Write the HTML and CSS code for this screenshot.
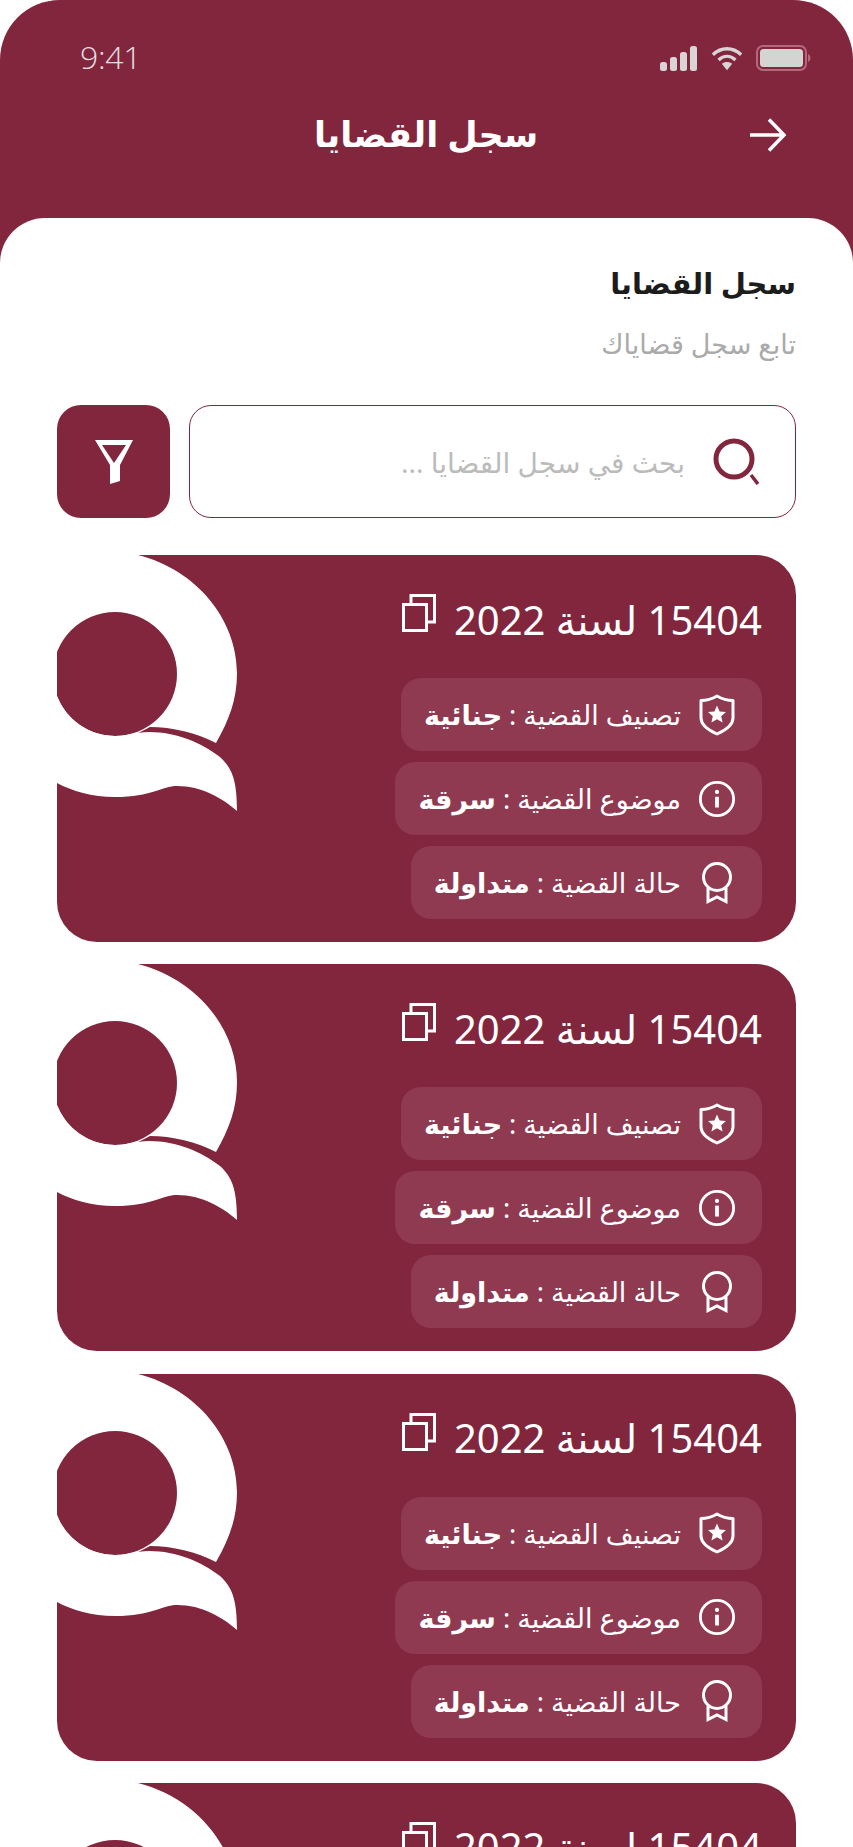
FILE: index.html
```html
<!DOCTYPE html>
<html lang="ar" dir="rtl">
  <head>
    <meta charset="UTF-8" />
    <meta name="viewport" content="width=device-width, initial-scale=1" />
    <title>سجل القضايا</title>
    <link rel="stylesheet" href="styles.css">
  </head>
  <body>
    <svg class="sprite" width="0" height="0" aria-hidden="true">
      <symbol id="mark" viewBox="-1 -1 181 257">
        <path fill="#fff" d="M-1 -1H79L81 0C140 15 180 65 180 118C180 145 172 165 159 188C140 178 115 172 93 172L58 190H-1Z"/>
        <circle fill="#82263e" cx="58" cy="119" r="62"/>
        <path fill="#fff" d="M-1 140L0 141A62 62 0 0 0 58 181C70 181 78 177 92 177C120 177 145 188 163 202C175 213 180 225 180 256C165 243 145 231 120 231C105 231 95 242 58 242C35 242 15 236 0 228L-1 228Z"/>
      </symbol>
      <symbol id="copy" viewBox="0 0 34 39">
        <path fill="none" stroke="#fff" stroke-width="3" d="M1.500 11.500H24.500V37.500H1.500ZM9 11V2.500H32.500V29H25"/>
      </symbol>
      <symbol id="shield" viewBox="0 0 36 42">
        <path fill="none" stroke="#fff" stroke-width="3" stroke-linejoin="round" d="M18 2C23 5 28 6.500 34 6.500V24C34 31 27 36 18 40C9 36 2 31 2 24V6.500C8 6.500 13 5 18 2Z"/>
        <path fill="#fff" d="M18 11.500L20.600 17.400L27 18L22.200 22.200L23.600 28.500L18 25.200L12.400 28.500L13.800 22.200L9 18L15.400 17.400Z"/>
      </symbol>
      <symbol id="info" viewBox="0 0 40 40">
        <circle fill="none" stroke="#fff" stroke-width="3" cx="20" cy="20" r="17.500"/>
        <circle fill="#fff" cx="20" cy="12.500" r="2.200"/>
        <path fill="#fff" d="M18 17.500H22V29H18Z"/>
      </symbol>
      <symbol id="ribbon" viewBox="0 0 32 42">
        <circle fill="none" stroke="#fff" stroke-width="3" cx="16" cy="15" r="13.500"/>
        <path fill="none" stroke="#fff" stroke-width="3" d="M7 26V39.500L16 35L25 39.500V26"/>
      </symbol>
    </svg>

    <div class="phone">
      <header class="topbar">
        <div class="status">
          <span class="clock" dir="ltr">9:41</span>
          <div class="status-icons" dir="ltr">
            <svg width="38" height="25" viewBox="0 0 38 25">
              <g fill="#d9d5d6">
                <rect x="0" y="16" width="7" height="9" rx="2.500"/>
                <rect x="10" y="11" width="7" height="14" rx="2.500"/>
                <rect x="20" y="6" width="7" height="19" rx="2.500"/>
                <rect x="30" y="0" width="7" height="25" rx="2.500"/>
              </g>
            </svg>
            <svg width="32" height="25" viewBox="0 0 34 25">
              <g fill="none" stroke="#d9d5d6" stroke-width="3.500">
                <path d="M2 8.500C11 0 23 0 32 8.500"/>
                <path d="M8 14C13.500 9 20.500 9 26 14"/>
              </g>
              <path fill="#d9d5d6" d="M11.500 18C15 15.500 19 15.500 22.500 18L17 25Z"/>
            </svg>
            <svg width="55" height="26" viewBox="0 0 55 26">
              <rect x="1" y="1" width="49" height="24" rx="6" fill="none" stroke="#b5677c" stroke-width="2"/>
              <rect x="4" y="4" width="43" height="18" rx="3.500" fill="#d4d4d2"/>
              <path fill="#b5677c" d="M52 9C54 10 54.500 11.500 54.500 13C54.500 14.500 54 16 52 17Z"/>
            </svg>
          </div>
        </div>
        <div class="nav">
          <svg class="back" width="38" height="34" viewBox="0 0 38 34">
            <path fill="none" stroke="#fff" stroke-width="3.500" d="M1 17H35M20 1.500L35 17L20 32.500"/>
          </svg>
          <h1>سجل القضايا</h1>
        </div>
      </header>

      <main class="sheet">
        <h2>سجل القضايا</h2>
        <p class="sub">تابع سجل قضاياك</p>

        <div class="tools">
          <div class="search">
            <svg width="46" height="47" viewBox="0 0 46 47">
              <circle cx="21" cy="21" r="18" fill="none" stroke="#82263e" stroke-width="5"/>
              <path d="M38 37L45 46" fill="none" stroke="#82263e" stroke-width="3.500"/>
            </svg>
            <span class="hint">بحث في سجل القضايا ...</span>
          </div>
          <button class="filter" type="button">
            <svg width="38" height="44" viewBox="0 0 38 44">
              <path fill="#fff" fill-rule="evenodd" d="M0 0H38L25 25V41L15 44V25ZM7 5L19 23L31 5Z"/>
            </svg>
          </button>
        </div>

        <section class="case">
          <svg class="mark"><use href="#mark"/></svg>
          <div class="case-title">
            <span>15404 لسنة 2022</span>
            <svg class="copy"><use href="#copy"/></svg>
          </div>
          <div class="chip"><svg class="ic"><use href="#shield"/></svg><span>تصنيف القضية : <b>جنائية</b></span></div>
          <div class="chip"><svg class="ic"><use href="#info"/></svg><span>موضوع القضية : <b>سرقة</b></span></div>
          <div class="chip"><svg class="ic"><use href="#ribbon"/></svg><span>حالة القضية : <b>متداولة</b></span></div>
        </section>

        <section class="case">
          <svg class="mark"><use href="#mark"/></svg>
          <div class="case-title">
            <span>15404 لسنة 2022</span>
            <svg class="copy"><use href="#copy"/></svg>
          </div>
          <div class="chip"><svg class="ic"><use href="#shield"/></svg><span>تصنيف القضية : <b>جنائية</b></span></div>
          <div class="chip"><svg class="ic"><use href="#info"/></svg><span>موضوع القضية : <b>سرقة</b></span></div>
          <div class="chip"><svg class="ic"><use href="#ribbon"/></svg><span>حالة القضية : <b>متداولة</b></span></div>
        </section>

        <section class="case">
          <svg class="mark"><use href="#mark"/></svg>
          <div class="case-title">
            <span>15404 لسنة 2022</span>
            <svg class="copy"><use href="#copy"/></svg>
          </div>
          <div class="chip"><svg class="ic"><use href="#shield"/></svg><span>تصنيف القضية : <b>جنائية</b></span></div>
          <div class="chip"><svg class="ic"><use href="#info"/></svg><span>موضوع القضية : <b>سرقة</b></span></div>
          <div class="chip"><svg class="ic"><use href="#ribbon"/></svg><span>حالة القضية : <b>متداولة</b></span></div>
        </section>

        <section class="case">
          <svg class="mark"><use href="#mark"/></svg>
          <div class="case-title">
            <span>15404 لسنة 2022</span>
            <svg class="copy"><use href="#copy"/></svg>
          </div>
          <div class="chip"><svg class="ic"><use href="#shield"/></svg><span>تصنيف القضية : <b>جنائية</b></span></div>
          <div class="chip"><svg class="ic"><use href="#info"/></svg><span>موضوع القضية : <b>سرقة</b></span></div>
          <div class="chip"><svg class="ic"><use href="#ribbon"/></svg><span>حالة القضية : <b>متداولة</b></span></div>
        </section>
      </main>
    </div>
  </body>
</html>
```

FILE: styles.css
```css
html,
body {
  margin: 0;
  height: 100%;
  background: #fff;
}
body {
  overflow: hidden;
  font-family: "Noto Sans", "DejaVu Sans", sans-serif;
}
.sprite {
  position: absolute;
}
.phone {
  height: 1847px;
  overflow: hidden;
  background: #82263e;
  border-radius: 60px 60px 0 0;
  display: flex;
  flex-direction: column;
}
.topbar {
  height: 218px;
  flex: none;
  box-sizing: border-box;
  padding: 45px 42px 0 80px;
}
.status {
  display: flex;
  flex-direction: row-reverse;
  justify-content: space-between;
  align-items: center;
  height: 26px;
}
.clock {
  margin-top: -4px;
  font-family: "Open Sans", sans-serif;
  font-weight: 300;
  font-size: 32px;
  letter-spacing: -0.3px;
  color: #e6dfe1;
}
.status-icons {
  display: flex;
  align-items: center;
  gap: 13px;
}
.nav {
  position: relative;
  margin: 36px 24px 0 -15px;
  height: 56px;
  display: flex;
  align-items: center;
  justify-content: center;
}
.back {
  position: absolute;
  right: 0;
  top: 11px;
}
h1 {
  margin: -4px 0 0;
  color: #fff;
  font-size: 35px;
  font-weight: 700;
}
.sheet {
  flex: 1;
  background: #fff;
  border-radius: 45px 45px 0 0;
  padding: 40px 57px 0;
}
h2 {
  margin: 0;
  color: #1c1c1c;
  font-size: 29px;
  font-weight: 700;
  line-height: 50px;
}
.sub {
  margin: 16px 0 0;
  color: #aaa;
  font-size: 27px;
  line-height: 40px;
}
.tools {
  display: flex;
  gap: 19px;
  margin-top: 41px;
}
.search {
  flex: 1;
  height: 113px;
  box-sizing: border-box;
  border: 1.5px solid #82263e;
  border-radius: 22px;
  display: flex;
  align-items: center;
  gap: 28px;
  padding: 0 36px;
}
.hint {
  color: #bbb;
  font-size: 28px;
}
.filter {
  width: 113px;
  height: 113px;
  border: 0;
  padding: 0;
  background: #82263e;
  border-radius: 24px;
  display: flex;
  align-items: center;
  justify-content: center;
}
.case {
  position: relative;
  box-sizing: border-box;
  height: 387px;
  margin-top: 22.300px;
  background: #82263e;
  border-radius: 0 40px 40px 40px;
  overflow: hidden;
  padding: 41px 34px 0;
  color: #fff;
  display: flex;
  flex-direction: column;
  align-items: flex-start;
}
.tools + .case {
  margin-top: 37px;
}
.mark {
  position: absolute;
  left: -1px;
  top: -1px;
  width: 181px;
  height: 257px;
}
.case-title {
  display: flex;
  align-items: center;
  gap: 18px;
  height: 46px;
  margin-bottom: 36px;
  font-size: 40px;
  font-weight: 400;
}
.copy {
  width: 34px;
  height: 39px;
  margin-top: -13px;
}
.chip {
  height: 73px;
  box-sizing: border-box;
  margin-bottom: 11px;
  padding: 0 26px 0 23px;
  display: flex;
  align-items: center;
  gap: 17px;
  background: #8f3a51;
  border-radius: 20px;
  font-size: 27px;
}
.ic {
  width: 38px;
  height: 42px;
  flex: none;
}
```
